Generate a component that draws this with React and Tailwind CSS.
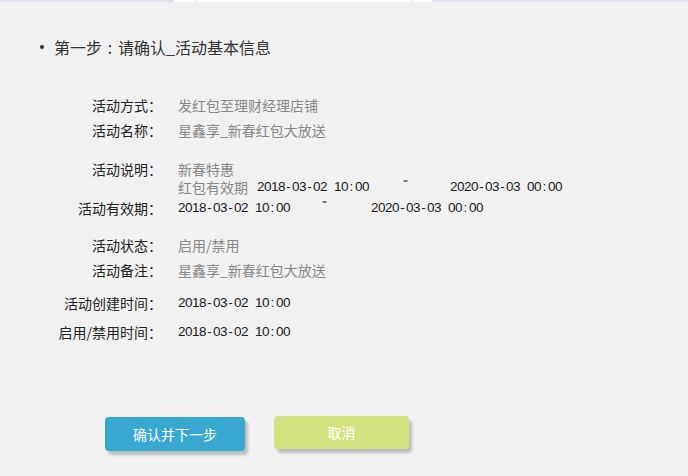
export default function App() {
  const Mono = ({ text }) => (
    <span className="inline-flex font-['Liberation_Sans',Arial,sans-serif] text-[13.5px] text-[#1a1a1a] leading-none">
      {text.split("").map((c, i) => (
        <span key={i} className="inline-block w-[7px] text-center">
          {c === " " ? "\u00a0" : c}
        </span>
      ))}
    </span>
  );
  const Tilde = () => (
    <span className="inline-block w-[7px] text-center font-['DejaVu_Sans',sans-serif] text-[12px] text-[#222] leading-none -translate-y-[1px]">˜</span>
  );
  const Row = ({ label, children, className = "" }) => (
    <div className={`flex h-[20px] items-center ${className}`}>
      <div className="w-[162px] shrink-0 text-right text-[14px] leading-[20px] text-[#222]">{label}</div>
      <div className="ml-[16px] flex items-center text-[14px] leading-[20px]">{children}</div>
    </div>
  );
  return (
    <div className="w-[688px] h-[476px] bg-[#f1f1f1] font-['Noto_Sans_CJK_SC',sans-serif] overflow-hidden">
      <div className="flex h-[2px]">
        <div className="w-[174px] bg-[#dfe4eb]" />
        <div className="w-[20px] bg-white" />
        <div className="w-[2px] bg-[#eceef0]" />
        <div className="w-[214px] bg-white" />
        <div className="w-[2px] bg-[#eceef0]" />
        <div className="w-[20px] bg-white" />
        <div className="flex-1 bg-[#dfe4eb]" />
      </div>
      <div className="flex h-[24px] items-center mt-[33px] pl-[40px] text-[16px] leading-[24px] text-[#333]">
        <span className="w-[4px] h-[4px] rounded-full bg-[#333]" />
        <span className="ml-[10px]">第一步</span>
        <span className="inline-block w-[16px] text-center">:</span>
        <span>请确认_活动基本信息</span>
      </div>
      <div className="mt-[36px]">
        <Row label="活动方式："><span className="text-[#888]">发红包至理财经理店铺</span></Row>
        <Row label="活动名称：" className="mt-[5px]"><span className="text-[#888]">星鑫享_新春红包大放送</span></Row>
        <div className="flex mt-[20px]">
          <div className="w-[162px] shrink-0 h-[18px] text-right text-[14px] leading-[18px] text-[#222]">活动说明：</div>
          <div className="ml-[16px] text-[14px] leading-[18px]">
            <div className="h-[18px] text-[#888]">新春特惠</div>
            <div className="h-[18px] flex items-center">
              <span className="text-[#888]">红包有效期</span>
              <span className="ml-[9px] flex"><Mono text="2018-03-02 10:00" /></span>
              <span className="ml-[33px] flex"><Tilde /></span>
              <span className="ml-[41px] flex"><Mono text="2020-03-03 00:00" /></span>
            </div>
          </div>
        </div>
        <Row label="活动有效期：" className="mt-[2px]">
          <Mono text="2018-03-02 10:00" />
          <span className="ml-[31px] flex"><Tilde /></span>
          <span className="ml-[43px] flex"><Mono text="2020-03-03 00:00" /></span>
        </Row>
        <Row label="活动状态：" className="mt-[17px]"><span className="text-[#888]">启用/禁用</span></Row>
        <Row label="活动备注：" className="mt-[5px]"><span className="text-[#888]">星鑫享_新春红包大放送</span></Row>
        <Row label="活动创建时间：" className="mt-[13px]"><Mono text="2018-03-02 10:00" /></Row>
        <Row label="启用/禁用时间：" className="mt-[9px]"><Mono text="2018-03-02 10:00" /></Row>
      </div>
      <div className="mt-[74px] flex items-start pl-[105px]">
        <button className="mt-[1px] w-[140px] h-[34px] rounded-[4px] bg-[#37a9d0] text-white text-[14px] shadow-[3px_4px_3px_rgba(0,0,0,0.22)]">
          确认并下一步
        </button>
        <button className="ml-[29px] w-[135px] h-[33px] rounded-[4px] bg-[#d4e17f] text-white text-[14px] shadow-[3px_4px_3px_rgba(0,0,0,0.22)]">
          取消
        </button>
      </div>
    </div>
  );
}
